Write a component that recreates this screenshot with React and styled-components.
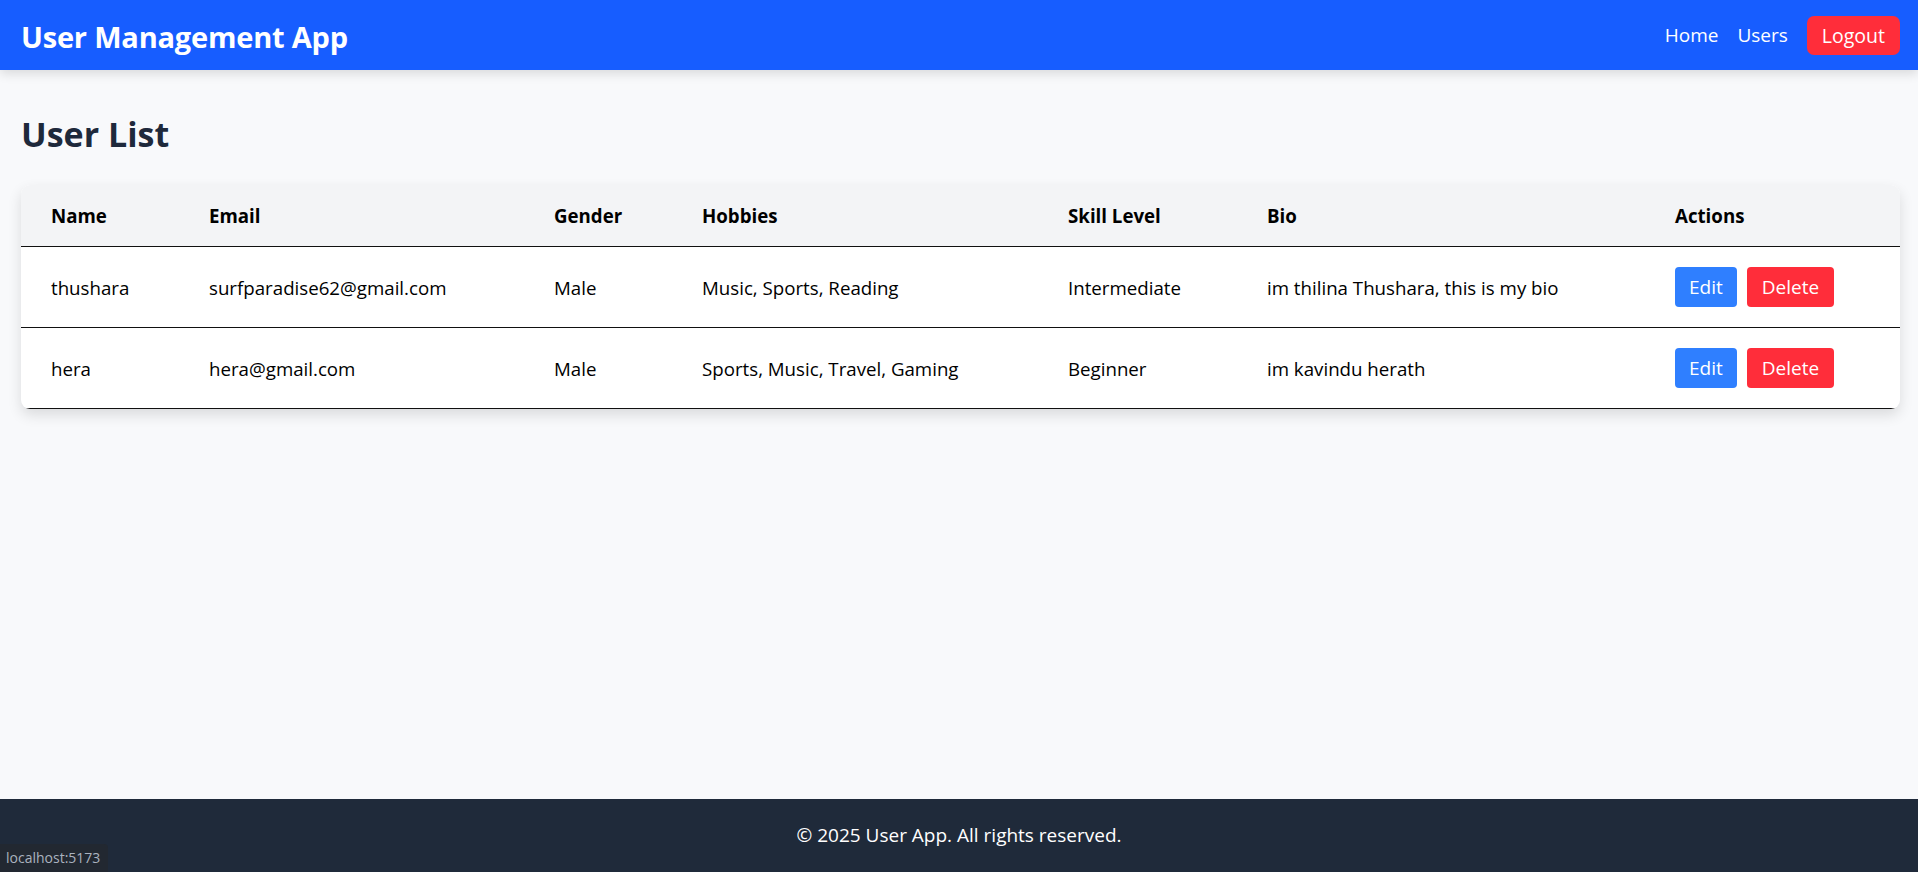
import React from "react";
import styled, { createGlobalStyle } from "styled-components";

const GlobalStyle = createGlobalStyle`
  * { box-sizing: border-box; }
  html, body { margin: 0; padding: 0; }
  body {
    font-family: "Open Sans", "Noto Sans", Arial, sans-serif;
    background: #f8f9fb;
    color: #111;
  }
`;

const Page = styled.div`
  min-height: 100vh;
  display: flex;
  flex-direction: column;
`;

const Navbar = styled.header`
  height: 70px;
  background: #175dff;
  display: flex;
  align-items: center;
  justify-content: space-between;
  padding: 0 18px 0 21px;
  box-shadow: 0 4px 10px rgba(0, 0, 0, 0.12);
  position: relative;
  z-index: 1;
`;

const Brand = styled.div`
  color: #fff;
  font-weight: 700;
  font-size: 29px;
  letter-spacing: -0.2px;
  padding-top: 2px;
`;

const NavLinks = styled.nav`
  display: flex;
  align-items: center;
  gap: 19px;
`;

const NavLink = styled.a`
  color: #fff;
  font-size: 19px;
  text-decoration: none;
`;

const LogoutButton = styled.button`
  background: #ff2d3a;
  color: #fff;
  border: none;
  border-radius: 7px;
  height: 39px;
  padding: 0 15px;
  font-family: inherit;
  font-size: 19.5px;
  cursor: pointer;
`;

const Main = styled.main`
  flex: 1;
  padding: 44px 18px 20px 21px;
`;

const Title = styled.h1`
  margin: 0 0 30px;
  font-size: 34px;
  font-weight: 700;
  color: #1e293b;
  line-height: 1.2;
`;

const Card = styled.div`
  background: #fff;
  border-radius: 9px;
  box-shadow: 0 6px 14px rgba(0, 0, 0, 0.12);
  overflow: hidden;
`;

const Table = styled.table`
  width: 100%;
  border-collapse: collapse;
  table-layout: fixed;
`;

const HeadRow = styled.tr`
  background: #f3f4f6;
  height: 62px;
  border-bottom: 1.5px solid #111;
`;

const Th = styled.th`
  text-align: left;
  font-weight: 700;
  font-size: 18.7px;
  padding: 0 0 0 30px;
  color: #000;
`;

const Row = styled.tr`
  height: 81px;
  border-bottom: 1.5px solid #111;
`;

const Td = styled.td`
  font-size: 18.7px;
  padding: 0 0 0 30px;
  color: #000;
  white-space: nowrap;
`;

const Actions = styled.div`
  display: flex;
  gap: 10px;
`;

const ActionButton = styled.button`
  background: ${(p) => (p.$danger ? "#ff2d3a" : "#2f7fff")};
  color: #fff;
  border: none;
  border-radius: 4px;
  height: 40px;
  padding: 0 ${(p) => (p.$danger ? "15px" : "14px")};
  font-family: inherit;
  font-size: 19px;
  cursor: pointer;
`;

const Footer = styled.footer`
  height: 73px;
  background: #1f2a3a;
  color: #fff;
  display: flex;
  align-items: center;
  justify-content: center;
  font-size: 19px;
  padding-bottom: 2px;
`;

const StatusTip = styled.div`
  position: fixed;
  left: 0;
  bottom: 0;
  background: #222831;
  color: #aab2bf;
  font-size: 14px;
  line-height: 18px;
  padding: 5px 8px 5px 6px;
  border-top-right-radius: 4px;
`;

const columns = [
  { key: "name", label: "Name", width: 158 },
  { key: "email", label: "Email", width: 345 },
  { key: "gender", label: "Gender", width: 148 },
  { key: "hobbies", label: "Hobbies", width: 366 },
  { key: "skill", label: "Skill Level", width: 199 },
  { key: "bio", label: "Bio", width: 408 },
  { key: "actions", label: "Actions", width: 255 },
];

const users = [
  {
    name: "thushara",
    email: "surfparadise62@gmail.com",
    gender: "Male",
    hobbies: "Music, Sports, Reading",
    skill: "Intermediate",
    bio: "im thilina Thushara, this is my bio",
  },
  {
    name: "hera",
    email: "hera@gmail.com",
    gender: "Male",
    hobbies: "Sports, Music, Travel, Gaming",
    skill: "Beginner",
    bio: "im kavindu herath",
  },
];

export default function App() {
  return (
    <>
      <GlobalStyle />
      <Page>
        <Navbar>
          <Brand>User Management App</Brand>
          <NavLinks>
            <NavLink href="#">Home</NavLink>
            <NavLink href="#">Users</NavLink>
            <LogoutButton>Logout</LogoutButton>
          </NavLinks>
        </Navbar>
        <Main>
          <Title>User List</Title>
          <Card>
            <Table>
              <colgroup>
                {columns.map((c) => (
                  <col key={c.key} style={{ width: c.width }} />
                ))}
              </colgroup>
              <thead>
                <HeadRow>
                  {columns.map((c) => (
                    <Th key={c.key}>{c.label}</Th>
                  ))}
                </HeadRow>
              </thead>
              <tbody>
                {users.map((u) => (
                  <Row key={u.email}>
                    <Td>{u.name}</Td>
                    <Td>{u.email}</Td>
                    <Td>{u.gender}</Td>
                    <Td>{u.hobbies}</Td>
                    <Td>{u.skill}</Td>
                    <Td>{u.bio}</Td>
                    <Td>
                      <Actions>
                        <ActionButton>Edit</ActionButton>
                        <ActionButton $danger>Delete</ActionButton>
                      </Actions>
                    </Td>
                  </Row>
                ))}
              </tbody>
            </Table>
          </Card>
        </Main>
        <Footer>© 2025 User App. All rights reserved.</Footer>
      </Page>
      <StatusTip>localhost:5173</StatusTip>
    </>
  );
}
